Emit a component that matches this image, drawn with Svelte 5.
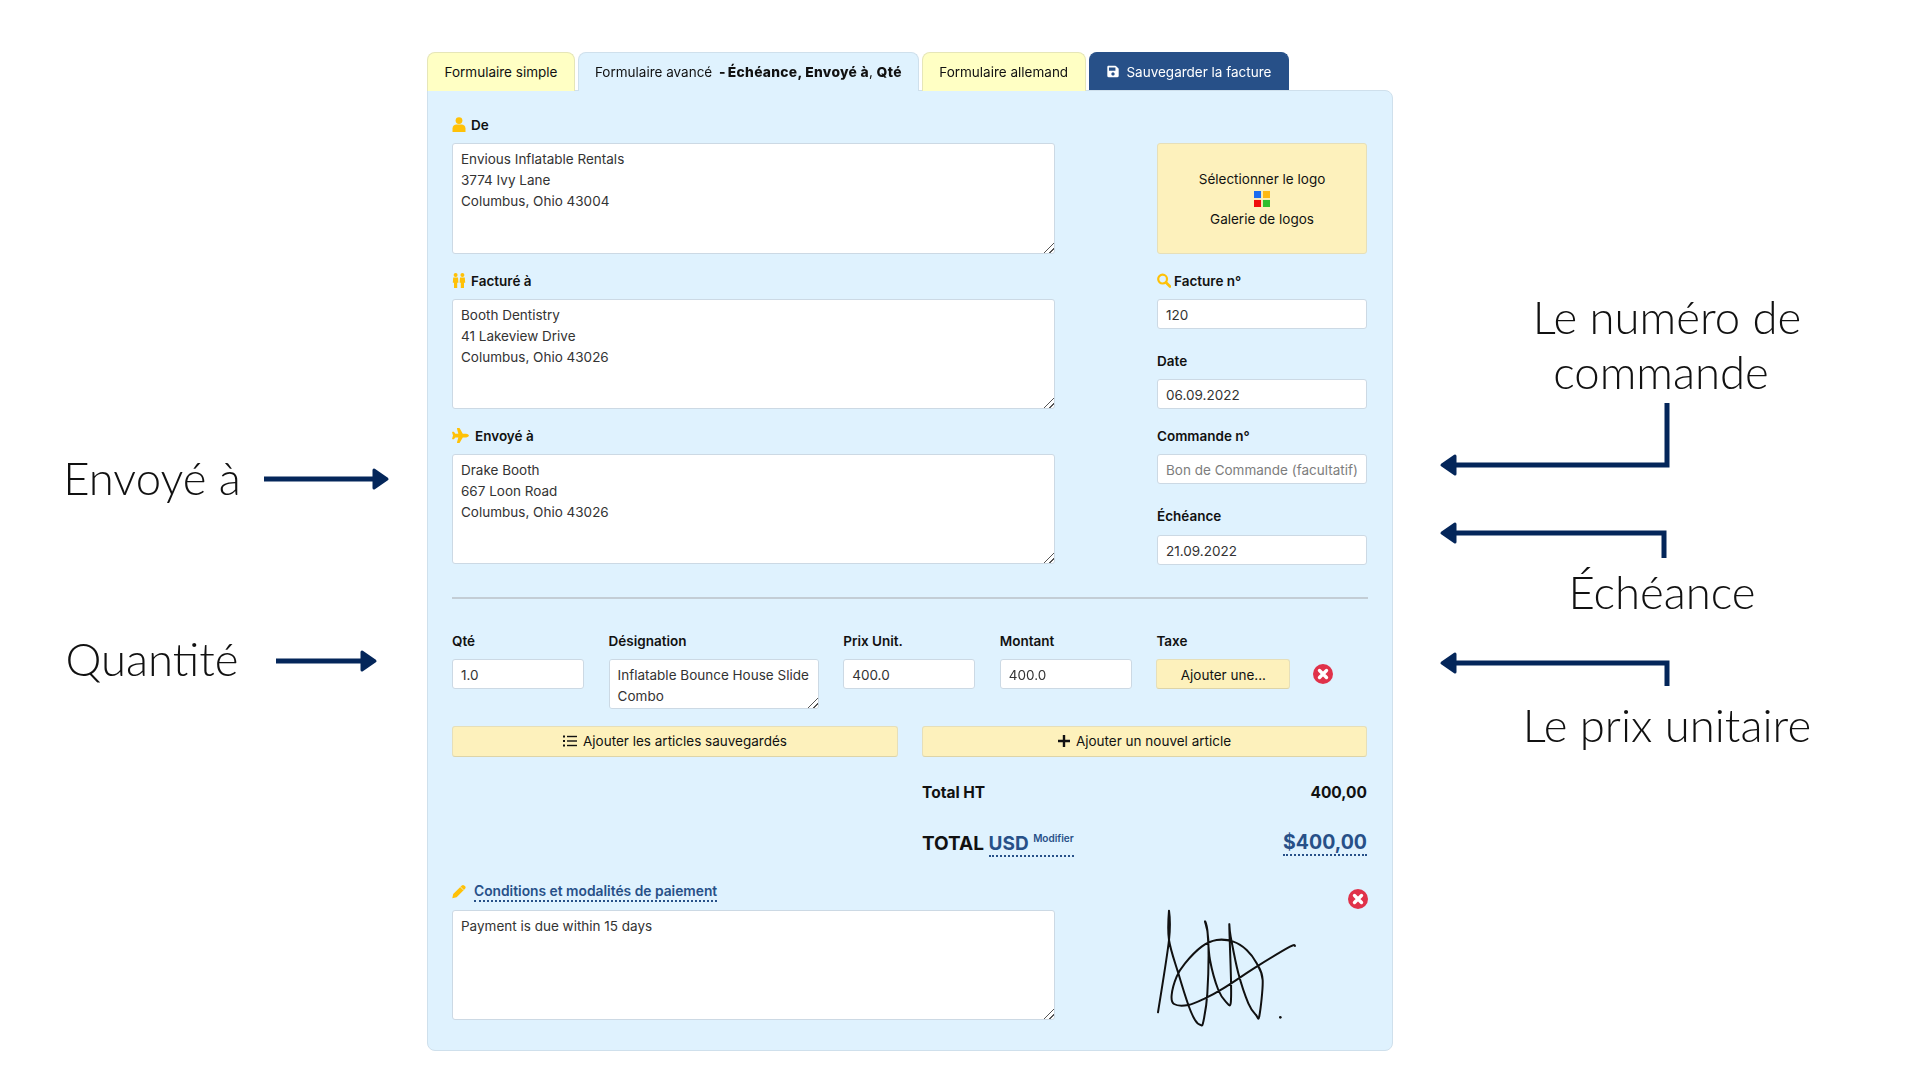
<script>
  const navy = '#04265a';

  const fromText = 'Envious Inflatable Rentals\n3774 Ivy Lane\nColumbus, Ohio 43004';
  const billText = 'Booth Dentistry\n41 Lakeview Drive\nColumbus, Ohio 43026';
  const shipText = 'Drake Booth\n667 Loon Road\nColumbus, Ohio 43026';
  const descText = 'Inflatable Bounce House Slide Combo';
  const termsText = 'Payment is due within 15 days';

  const callouts = [
    { text: 'Le numéro de', x: 1667, y: 290 },
    { text: 'commande', x: 1661, y: 345 },
    { text: 'Échéance', x: 1662, y: 565 },
    { text: 'Le prix unitaire', x: 1667, y: 698 },
    { text: 'Envoyé à', x: 152, y: 451 },
    { text: 'Quantité', x: 152, y: 632 }
  ];

  const arrows = [
    'M1667 403V465H1450',
    'M1664 558V533H1450',
    'M1667 686V663H1450',
    'M264 479H380',
    'M276 661H368'
  ];
  const heads = [
    'M1442 465L1455 456V474Z',
    'M1442 533L1455 524V542Z',
    'M1442 663L1455 654V672Z',
    'M387 479L374 470V488Z',
    'M375 661L362 652V670Z'
  ];

  // signature points, traced by hand
  const signPoints = [
    [84,397],[117,180],[117,92],[117,180],[145,280],[175,375],[195,420],[212,435],[220,425],[232,340],
    [235,180],[225,125],[232,150],[240,240],[265,330],[290,368],[302,370],[303,300],[298,140],[302,170],
    [325,280],[355,370],[378,405],[388,408],[398,300],[380,250],[350,210],[310,185],[260,180],[215,200],
    [165,250],[140,290],[125,345],[132,372],[175,375],[225,355],[280,325],[380,260],[480,200],[495,198]
  ];

  function smoothPath(pts) {
    let d = `M${pts[0][0]} ${pts[0][1]}`;
    for (let i = 0; i < pts.length - 1; i++) {
      const p0 = pts[i - 1] || pts[i];
      const p1 = pts[i];
      const p2 = pts[i + 1];
      const p3 = pts[i + 2] || p2;
      const c1x = p1[0] + (p2[0] - p0[0]) / 6;
      const c1y = p1[1] + (p2[1] - p0[1]) / 6;
      const c2x = p2[0] - (p3[0] - p1[0]) / 6;
      const c2y = p2[1] - (p3[1] - p1[1]) / 6;
      d += `C${c1x} ${c1y} ${c2x} ${c2y} ${p2[0]} ${p2[1]}`;
    }
    return d;
  }

  const signPath = smoothPath(signPoints);
</script>

{#snippet closeIcon()}
  <svg class="close" viewBox="0 0 20 20">
    <circle cx="10" cy="10" r="10" fill="#e0324a" />
    <path d="M6.5 6.5L13.5 13.5M13.5 6.5L6.5 13.5" stroke="#fff" stroke-width="3.4" stroke-linecap="round" />
  </svg>
{/snippet}

<div class="page">
  <div class="sheet">
    <div class="tabs">
      <div class="tab">Formulaire simple</div>
      <div class="tab active">Formulaire avancé <b class="dash">-</b> <b>Échéance, Envoyé à</b>, <b>Qté</b></div>
      <div class="tab">Formulaire allemand</div>
      <div class="tab save">
        <svg class="save-icon" viewBox="0 0 448 512">
          <path fill="#fff" d="M433.941 129.941l-83.882-83.882A48 48 0 0 0 316.118 32H48C21.49 32 0 53.49 0 80v352c0 26.51 21.49 48 48 48h352c26.51 0 48-21.49 48-48V163.882a48 48 0 0 0-14.059-33.941zM224 416c-35.346 0-64-28.654-64-64 0-35.346 28.654-64 64-64s64 28.654 64 64c0 35.346-28.654 64-64 64zm96-304.52V212c0 6.627-5.373 12-12 12H76c-6.627 0-12-5.373-12-12V108c0-6.627 5.373-12 12-12h228.52c3.183 0 6.235 1.264 8.485 3.515l3.48 3.48A11.996 11.996 0 0 1 320 111.48z" />
        </svg>
        Sauvegarder la facture
      </div>
    </div>

    <div class="panel">
      <div class="top">
        <div class="left">
          <div class="label">
            <svg class="icon" viewBox="0 0 14 15">
              <circle cx="7" cy="3.6" r="3.4" fill="#ffc107" />
              <path d="M0.5 15V11.5C0.5 9 2.5 7.6 4.5 7.6H9.5C11.5 7.6 13.5 9 13.5 11.5V15Z" fill="#ffc107" />
            </svg>
            De
          </div>
          <textarea class="big first" value={fromText}></textarea>

          <div class="label">
            <svg class="icon" viewBox="0 0 14 15">
              <g fill="#ffc107">
                <circle cx="3.6" cy="2" r="2" />
                <circle cx="10.4" cy="2" r="2" />
                <path d="M1.2 4.6H6L6.4 9.8H5.2V15H2V9.8H0.8Z" />
                <path d="M8 4.6H12.8L13.2 9.8H12V15H8.8V9.8H7.6Z" />
              </g>
            </svg>
            Facturé à
          </div>
          <textarea class="big" value={billText}></textarea>

          <div class="label wide-gap">
            <svg class="icon plane" viewBox="0 0 576 512">
              <path fill="#ffc107" d="M480 192H365.71L260.61 8.06A16.014 16.014 0 0 0 246.71 0h-65.5c-10.63 0-18.3 10.17-15.38 20.39L214.86 192H112l-43.2-57.6c-3.02-4.03-7.77-6.4-12.8-6.4H16.01C5.6 128-2.04 137.78.49 147.88L32 256 .49 364.12C-2.04 374.22 5.6 384 16.01 384H56c5.04 0 9.78-2.37 12.8-6.4L112 320h102.86l-49.03 171.6c-2.92 10.22 4.75 20.4 15.38 20.4h65.5c5.74 0 11.04-3.08 13.89-8.06L365.71 320H480c35.35 0 96-28.65 96-64s-60.65-64-96-64z" />
            </svg>
            Envoyé à
          </div>
          <textarea class="big" value={shipText}></textarea>
        </div>

        <div class="right">
          <div class="logo">
            <span>Sélectionner le logo</span>
            <svg class="grid" viewBox="0 0 17 17">
              <rect width="7.5" height="7.5" fill="#1a6cf0" />
              <rect x="9.5" width="7.5" height="7.5" fill="#fdb813" />
              <rect y="9.5" width="7.5" height="7.5" fill="#f00d0d" />
              <rect x="9.5" y="9.5" width="7.5" height="7.5" fill="#2fbf2f" />
            </svg>
            <span>Galerie de logos</span>
          </div>

          <div class="label mt16 narrow-gap">
            <svg class="icon" viewBox="0 0 14 14">
              <circle cx="5.6" cy="5.6" r="4.4" fill="none" stroke="#ffc107" stroke-width="2.2" />
              <path d="M9 9L13 13" stroke="#ffc107" stroke-width="2.6" stroke-linecap="round" />
            </svg>
            Facture n°
          </div>
          <input value="120" />

          <div class="label mt21">Date</div>
          <input value="06.09.2022" />

          <div class="label mt16">Commande n°</div>
          <input placeholder="Bon de Commande (facultatif)" />

          <div class="label mt21 mb9">Échéance</div>
          <input value="21.09.2022" />
        </div>
      </div>

      <div class="rule"></div>

      <div class="items">
        <div class="label">Qté</div>
        <div class="label">Désignation</div>
        <div class="label">Prix Unit.</div>
        <div class="label">Montant</div>
        <div class="label">Taxe</div>
        <div></div>

        <input value="1.0" />
        <textarea class="desc" value={descText}></textarea>
        <input value="400.0" />
        <input value="400.0" />
        <button class="yellow tax">Ajouter une...</button>
        <div class="remove">{@render closeIcon()}</div>
      </div>

      <div class="actions">
        <button class="yellow">
          <svg class="btn-icon" viewBox="0 0 14 12">
            <g fill="#111">
              <rect y="0.5" width="2" height="2" />
              <rect y="5" width="2" height="2" />
              <rect y="9.5" width="2" height="2" />
              <rect x="4" y="0.8" width="10" height="1.4" />
              <rect x="4" y="5.3" width="10" height="1.4" />
              <rect x="4" y="9.8" width="10" height="1.4" />
            </g>
          </svg>
          Ajouter les articles sauvegardés
        </button>
        <button class="yellow">
          <svg class="btn-icon plus" viewBox="0 0 12 12">
            <path d="M6 0.5V11.5M0.5 6H11.5" stroke="#111" stroke-width="2.4" stroke-linecap="round" />
          </svg>
          Ajouter un nouvel article
        </button>
      </div>

      <div class="totals">
        <div class="sub-row">
          <span>Total HT</span>
          <span>400,00</span>
        </div>
        <div class="total-row">
          <span>TOTAL <span class="dotted currency">USD <sup>Modifier</sup></span></span>
          <span class="dotted amount">$400,00</span>
        </div>
      </div>

      <div class="bottom">
        <div class="left">
          <div class="label">
            <svg class="icon pencil" viewBox="0 0 14 14">
              <path d="M0.3 13.7L1.2 9.4L9.8 0.9C10.5 0.2 11.5 0.2 12.2 0.9L13.1 1.8C13.8 2.5 13.8 3.5 13.1 4.2L4.6 12.8Z" fill="#ffc107" />
              <path d="M8.4 2.4L11.6 5.6" stroke="#dff2fe" stroke-width="0.8" />
            </svg>
            <span class="link">Conditions et modalités de paiement</span>
          </div>
          <textarea class="terms" value={termsText}></textarea>
        </div>
        <div class="signature">
          <svg viewBox="81 3 630 510" width="210" height="170">
            <path d={signPath} fill="none" stroke="#111" stroke-width="6" stroke-linejoin="round" stroke-linecap="round" />
            <circle cx="451" cy="412" r="4" fill="#111" />
          </svg>
          <div class="sign-close">{@render closeIcon()}</div>
        </div>
      </div>
    </div>
  </div>

  <!-- annotations sit on top of the screenshot like slide callouts -->
  <svg class="callouts" width="1920" height="1080">
    {#each arrows as d}
      <path {d} fill="none" stroke={navy} stroke-width="5" />
    {/each}
    {#each heads as d}
      <path {d} fill={navy} stroke={navy} stroke-width="3" stroke-linejoin="round" />
    {/each}
  </svg>
  {#each callouts as note}
    <div class="note" style="left: {note.x}px; top: {note.y}px">{note.text}</div>
  {/each}
</div>

<style>
  :global(body) {
    margin: 0;
    background: #fff;
  }

  .page {
    position: relative;
    width: 1920px;
    height: 1080px;
    overflow: hidden;
    font-family: Inter, "Noto Sans", sans-serif;
    font-size: 13.5px;
    color: #111;
  }

  .sheet {
    width: 966px;
    margin-left: 427px;
    padding-top: 52px;
  }

  .tabs {
    display: flex;
    gap: 3px;
    height: 38px;
  }

  .tab {
    display: flex;
    align-items: center;
    gap: 4px;
    box-sizing: border-box;
    height: 39px;
    padding: 0 16.5px;
    background: #ffffc4;
    border: 1px solid #e6e6b8;
    border-bottom: none;
    border-radius: 8px 8px 0 0;
    white-space: pre;
    position: relative;
    z-index: 1;
  }

  .tab b {
    font-weight: 800;
    font-size: 13.8px;
    letter-spacing: 0.3px;
  }

  .tab b.dash {
    margin: 0 2px 0 3px;
  }

  .tab.active {
    background: #dff2fe;
    border-color: #cfe0ec;
    gap: 0;
    padding: 0 16px;
  }

  .tab.save {
    background: #275088;
    border-color: #275088;
    color: #fff;
    height: 38px;
    padding: 0 16.5px 0 17px;
  }

  .save-icon {
    width: 12px;
    height: 13px;
  }

  .panel {
    box-sizing: border-box;
    height: 961px;
    padding: 23px 24px 0;
    background: #dff2fe;
    border: 1px solid #cfe0ec;
    border-radius: 0 8px 8px 8px;
  }

  .top {
    display: grid;
    grid-template-columns: 603px 210px;
    column-gap: 102px;
  }

  .left,
  .right {
    display: flex;
    flex-direction: column;
  }

  .label {
    display: flex;
    align-items: center;
    gap: 5px;
    height: 21px;
    margin-bottom: 8px;
    font-weight: 600;
    white-space: nowrap;
  }

  .wide-gap { gap: 6px; }
  .narrow-gap { gap: 3px; }

  .icon {
    width: 14px;
    height: 15px;
    flex: none;
  }

  .icon.plane {
    width: 17px;
    height: 15px;
  }

  .mt16 { margin-top: 16px; }
  .mt21 { margin-top: 21px; }
  .mb9 { margin-bottom: 9px; }

  textarea,
  input {
    box-sizing: border-box;
    display: block;
    width: 100%;
    margin: 0;
    background: #fff;
    border: 1px solid #ccd9e4;
    border-radius: 3px;
    font: inherit;
    color: #333;
    outline: none;
  }

  input {
    height: 30px;
    padding: 1px 8px 0;
  }

  input::placeholder {
    color: #7d7d7d;
    opacity: 1;
  }

  textarea {
    line-height: 21px;
    padding: 4.5px 8px;
  }

  textarea::-webkit-resizer {
    background: linear-gradient(135deg, transparent 64%, #555 64%, #555 69%, transparent 69%, transparent 82%, #555 82%, #555 87%, transparent 87%);
  }

  .big {
    height: 110px;
    margin-bottom: 16px;
  }

  .big:last-child {
    margin-bottom: 0;
  }

  .big.first {
    height: 111px;
    margin-bottom: 16px;
  }

  .logo {
    box-sizing: border-box;
    height: 111px;
    margin-top: 29px;
    display: flex;
    flex-direction: column;
    align-items: center;
    justify-content: center;
    gap: 4px;
    background: #fdf1bc;
    border: 1px solid #e6dfb9;
    border-radius: 3px;
  }

  .grid {
    width: 16px;
    height: 16px;
  }

  .rule {
    height: 2px;
    margin-top: 32px;
    background: #c3cdd5;
  }

  .items {
    display: grid;
    grid-template-columns: 132px 210px 132px 132px 134px 1fr;
    column-gap: 24.6px;
    align-items: start;
    margin-top: 31px;
  }

  .desc {
    height: 50px;
  }

  .yellow {
    box-sizing: border-box;
    display: flex;
    align-items: center;
    justify-content: center;
    gap: 6px;
    height: 31px;
    padding: 0 0 1px;
    background: #fdf1bc;
    border: 1px solid #e6dfb9;
    border-bottom-color: #ddd4a8;
    border-radius: 3px;
    font: inherit;
    color: #111;
  }

  .tax {
    width: 134px;
    height: 30px;
    padding: 1px 0 0;
  }

  .remove {
    display: flex;
    height: 30px;
    align-items: center;
    margin-left: -2px;
  }

  .close {
    display: block;
    width: 20px;
    height: 20px;
  }

  .actions {
    display: grid;
    grid-template-columns: 446px 445px;
    column-gap: 24px;
    margin-top: 17px;
  }

  .btn-icon {
    width: 14px;
    height: 12px;
  }

  .btn-icon.plus {
    width: 12px;
    height: 12px;
  }

  .totals {
    width: 445px;
    margin-left: 470px;
    font-weight: 700;
  }

  .sub-row,
  .total-row {
    display: flex;
    justify-content: space-between;
    align-items: center;
  }

  .sub-row {
    height: 24px;
    margin-top: 23px;
    font-size: 15.5px;
  }

  .total-row {
    height: 30px;
    margin-top: 24px;
    font-size: 19px;
  }

  .dotted {
    color: #275088;
    border-bottom: 2px dotted #275088;
  }

  .amount {
    font-size: 19.5px;
  }

  .currency sup {
    font-size: 10px;
    font-weight: 600;
    vertical-align: 8px;
    line-height: 0;
  }

  .bottom {
    display: grid;
    grid-template-columns: 603px 210px;
    column-gap: 102px;
    margin-top: 23px;
  }

  .link {
    color: #275088;
    border-bottom: 2px dotted #275088;
    font-size: 13.8px;
    line-height: 18px;
    margin-left: 3px;
  }

  .terms {
    height: 110px;
  }

  .signature {
    position: relative;
    height: 170px;
  }

  .sign-close {
    position: absolute;
    right: -1px;
    top: 8px;
  }

  .callouts {
    position: absolute;
    left: 0;
    top: 0;
    pointer-events: none;
  }

  .note {
    position: absolute;
    transform: translateX(-50%);
    font-family: Lato, sans-serif;
    font-weight: 300;
    font-size: 45.5px;
    line-height: 54px;
    color: #111;
    white-space: nowrap;
  }
</style>
